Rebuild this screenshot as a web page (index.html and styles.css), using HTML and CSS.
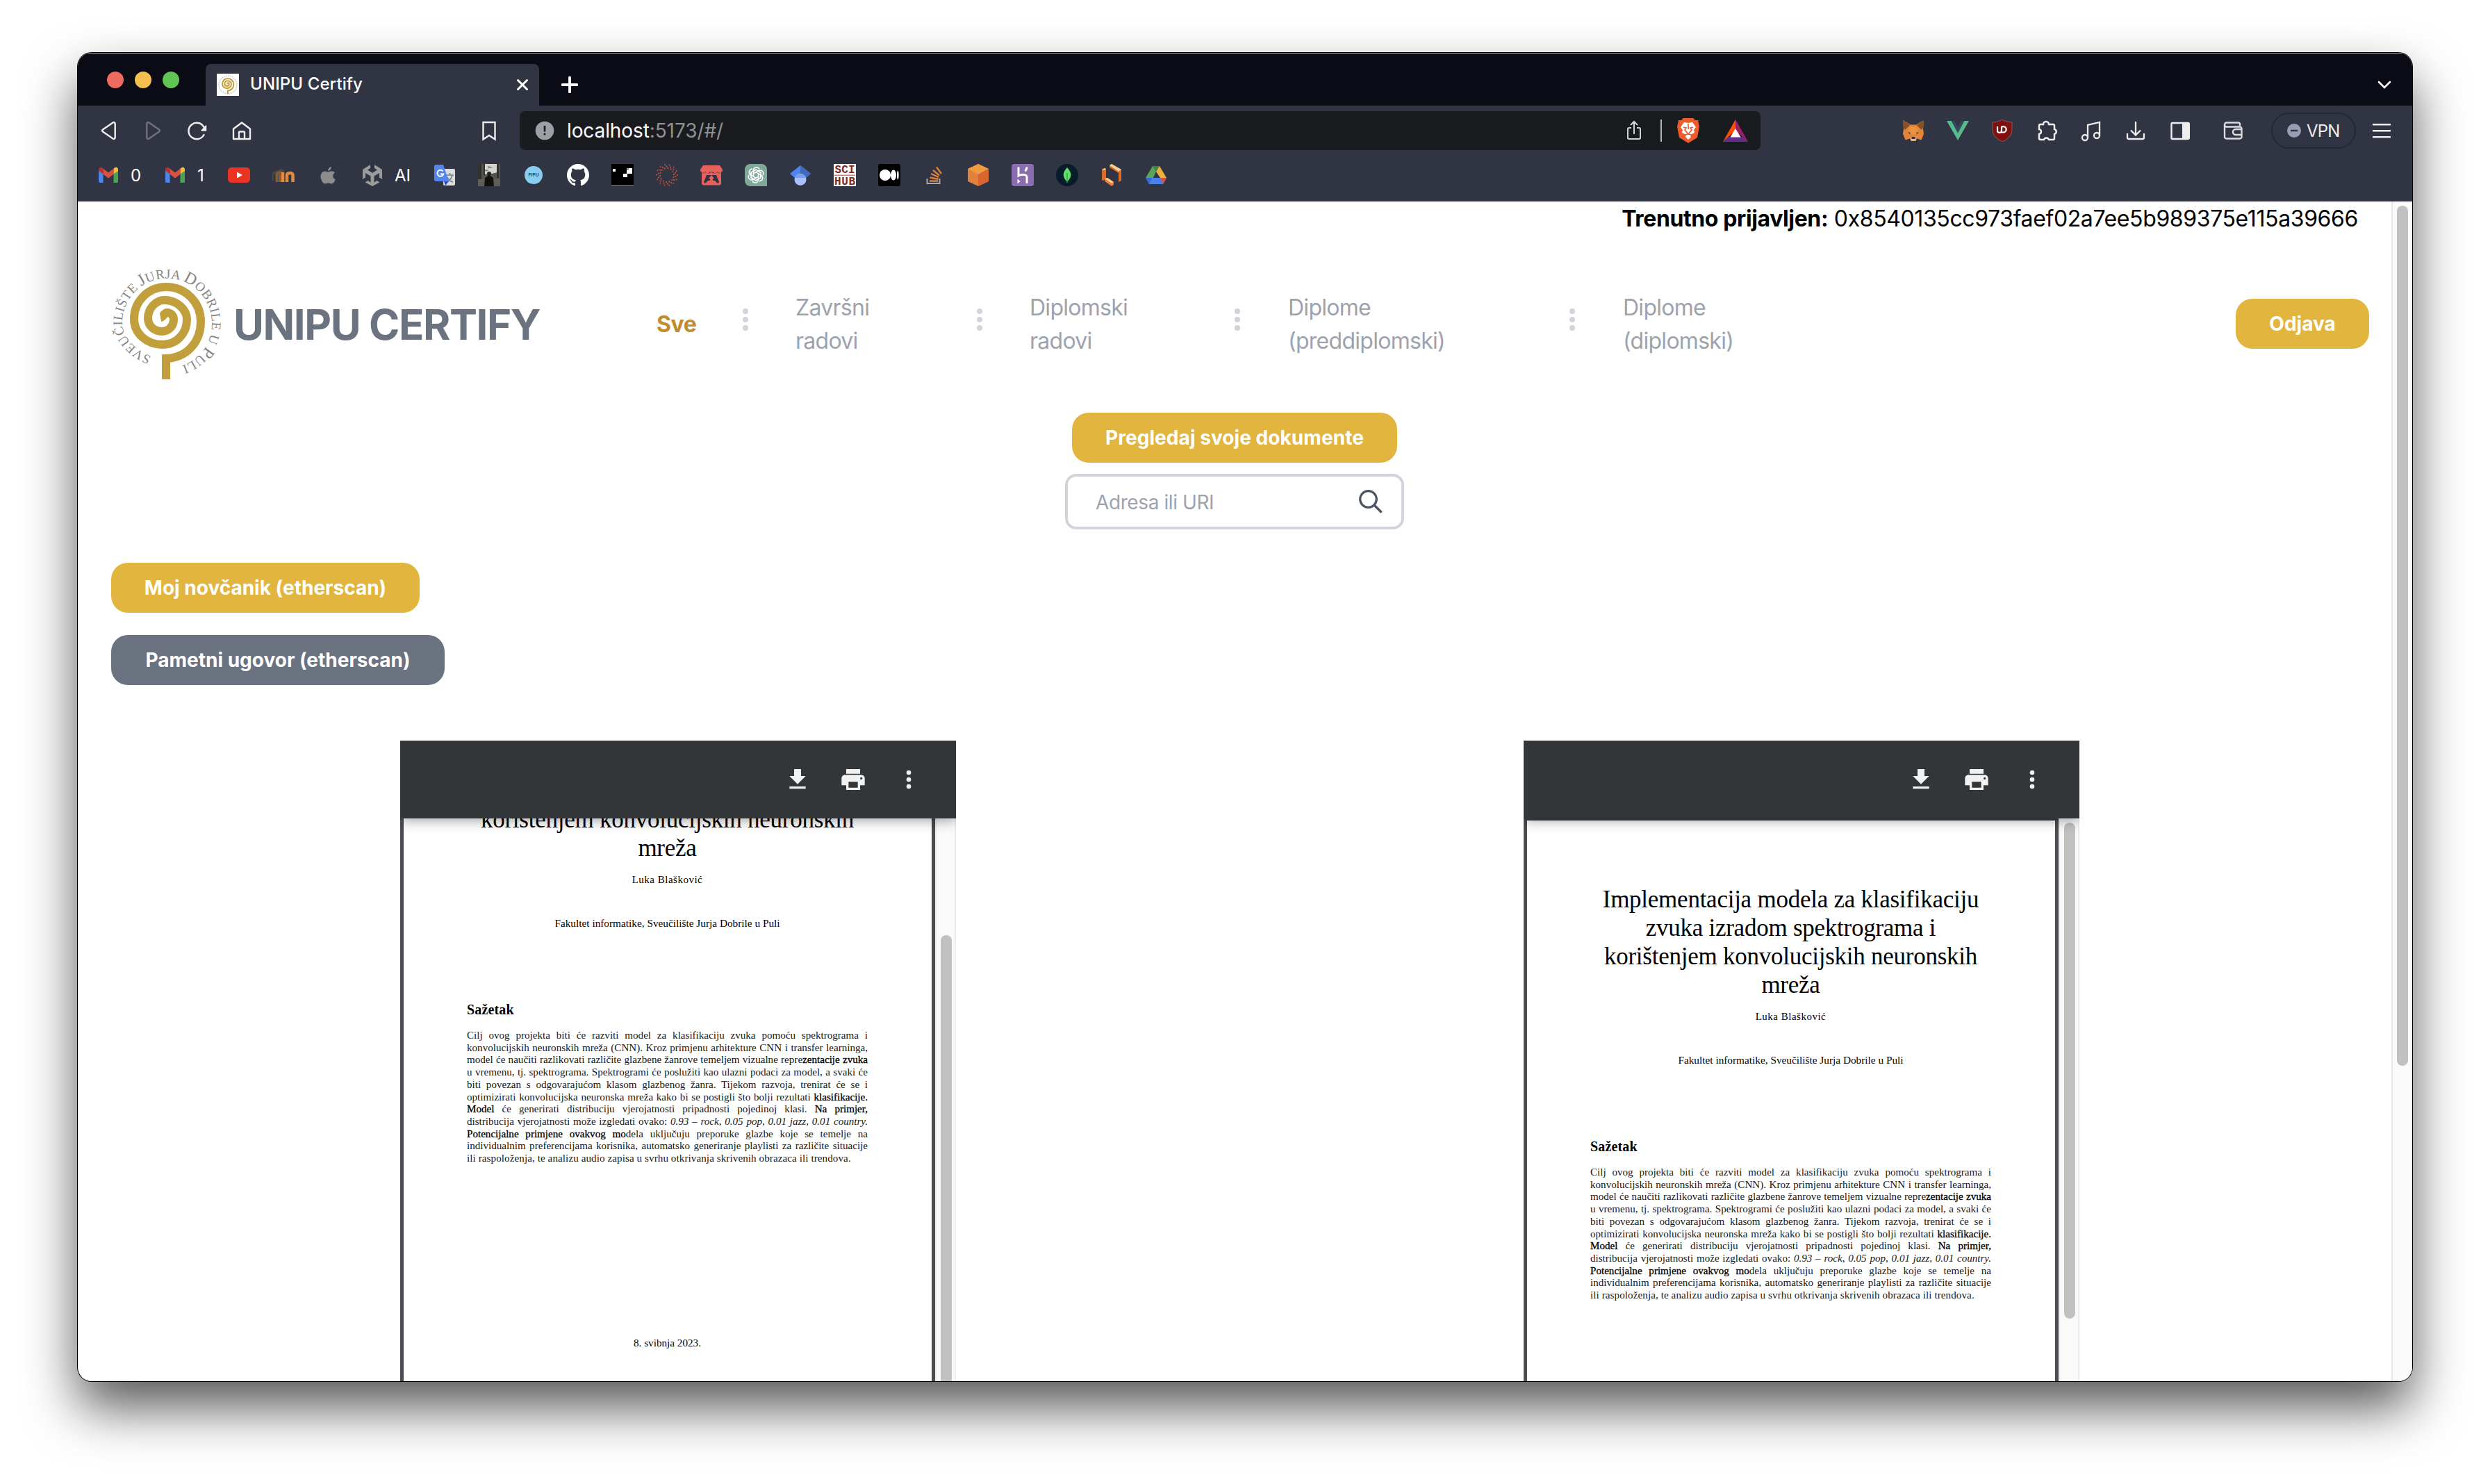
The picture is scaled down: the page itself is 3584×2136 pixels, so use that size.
FILE: index.html
```html
<!DOCTYPE html>
<html lang="hr">
<head>
<meta charset="utf-8">
<title>UNIPU Certify</title>
<link rel="stylesheet" href="styles.css">
</head>
<body>
<svg width="0" height="0" class="defs">
  <defs>
    <symbol id="spiral" viewBox="0 0 160 160">
      <path d="M79 160V130C109 129 129 106 129 77C129 49 107 27 79 27C53 27 33 48 33 73C33 94 51 110 74 110C94 110 109 94 109 74C109 59 94 46 77 46C64 46 53 58 53 72C53 83 62 91 73 91C83 91 90 83 90 74C90 68 86 64 80 64C76 64 76 70 71 71" fill="none" stroke="#c19f3d" stroke-width="12"/>
    </symbol>
    <symbol id="gmail" viewBox="0 0 32 32">
      <path d="M2 8v17a2 2 0 0 0 2 2h4.500V14z" fill="#4b85ee"/><path d="M30 8v17a2 2 0 0 1-2 2h-4.500V14z" fill="#4aa353"/>
      <path d="M23.500 6.500v8L30 10V8c0-3-3-4-5-2.500z" fill="#f2bd42"/><path d="M8.500 6.500v8L2 10V8c0-3 3-4 5-2.500z" fill="#b5342b"/>
      <path d="M8.500 6.700L16 12.500l7.500-5.800v8L16 20.500l-7.500-5.800z" fill="#d95140"/>
    </symbol>
    <symbol id="download" viewBox="0 0 24 24"><path d="M19 9h-4V3H9v6H5l7 7zM5 18v2h14v-2z" fill="#f1f1f1"/></symbol>
    <symbol id="print" viewBox="0 0 24 24"><path d="M19 8H5c-1.660 0-3 1.340-3 3v6h4v4h12v-4h4v-6c0-1.660-1.340-3-3-3zm-3 11H8v-5h8zm3-7a1 1 0 1 1 0-2 1 1 0 0 1 0 2zM18 3H6v4h12z" fill="#f1f1f1"/></symbol>
    <symbol id="more" viewBox="0 0 24 24"><g fill="#f1f1f1"><circle cx="12" cy="6" r="2"/><circle cx="12" cy="12" r="2"/><circle cx="12" cy="18" r="2"/></g></symbol>
    <symbol id="dots" viewBox="0 0 20 32"><g fill="#d1d5db"><circle cx="10" cy="4" r="4"/><circle cx="10" cy="16" r="4"/><circle cx="10" cy="28" r="4"/></g></symbol>
  </defs>
</svg>
<div class="window">
  <div class="tabstrip">
    <div class="lights"><i class="red"></i><i class="yellow"></i><i class="green"></i></div>
    <div class="tab">
      <svg class="favicon" viewBox="-14 -14 188 188"><circle cx="80" cy="80" r="76" fill="none" stroke="#c4c4c4" stroke-width="9" stroke-dasharray="9 8"/><use href="#spiral" width="160" height="160"/></svg>
      <span class="tab-title">UNIPU Certify</span>
      <svg class="close" viewBox="0 0 20 20"><path d="M3.500 3.500l13 13M16.500 3.500l-13 13" stroke="#fff" stroke-width="3" stroke-linecap="round"/></svg>
    </div>
    <svg class="plus" viewBox="0 0 24 24"><path d="M12 1.500v21M1.500 12h21" stroke="#fff" stroke-width="3.800" stroke-linecap="round"/></svg>
    <svg class="chev" viewBox="0 0 20 20"><path d="M2 6l8 8 8-8" fill="none" stroke="#fff" stroke-width="2.600" stroke-linecap="round"/></svg>
  </div>
  <div class="toolbar">
    <svg class="ic" viewBox="0 0 32 32"><path d="M22.500 4.500c1.500-1 3.200 0 3.200 1.800v19.400c0 1.800-1.700 2.800-3.200 1.800L8 17.500c-1.300-1-1.300-2 0-3z" fill="none" stroke="#eeeeee" stroke-width="2.400"/></svg>
    <svg class="ic" viewBox="0 0 32 32"><path d="M10.500 4.500c-1.500-1-3.200 0-3.200 1.800v19.400c0 1.800 1.700 2.800 3.200 1.800L25 17.500c1.300-1 1.300-2 0-3z" fill="none" stroke="#70727d" stroke-width="2.400"/></svg>
    <svg class="ic" viewBox="0 0 32 32"><path d="M25.500 11A11.700 11.700 0 1 0 25.500 22" fill="none" stroke="#eee" stroke-width="2.400" stroke-linecap="round"/><path d="M28.500 9v7h-6.500z" fill="#eee" stroke="#eee" stroke-width="1.500" stroke-linejoin="round"/></svg>
    <svg class="ic" viewBox="0 0 32 32"><path d="M4 13.500L16 4.500l12 9V28H4z M12 28V18.500a1 1 0 0 1 1-1h6a1 1 0 0 1 1 1V28" fill="none" stroke="#eee" stroke-width="2.400" stroke-linejoin="round"/></svg>
    <svg class="ic bm" viewBox="0 0 32 32"><path d="M7.500 4h17v24.500L16 23l-8.500 5.500z" fill="none" stroke="#eee" stroke-width="2.400"/></svg>
    <div class="url">
      <svg class="ic" viewBox="0 0 32 32"><circle cx="16" cy="16" r="13.300" fill="#9aa0a6"/><path d="M16 9v8.500" stroke="#1a1b1f" stroke-width="2.600"/><circle cx="16" cy="21" r="1.600" fill="#1a1b1f"/></svg>
      <span class="addr"><b>localhost</b>:5173/#/</span>
      <svg class="ic share" viewBox="0 0 32 32"><path d="M12 12H9a2 2 0 0 0-2 2v12a2 2 0 0 0 2 2h14a2 2 0 0 0 2-2V14a2 2 0 0 0-2-2h-3M16 21V3M11 8l5-5 5 5" fill="none" stroke="#d3d4d6" stroke-width="2"/></svg>
      <i class="sep"></i>
      <svg class="brave" viewBox="0 0 32 36"><path d="M9 0h14l3 3 4 0 1 5 1 4-3 16-13 8-13-8L0 12l1-4 1-5h4z" fill="#ef5b2a"/><path d="M10 6l6 1 6-1 5 7-3 4 1 4-6 3 1 3-4 4-4-4 1-3-6-3 1-4-3-4z" fill="#fff"/><path d="M9 13l4 1-2 3 5 6 5-6-2-3 4-1M16 8v8M12 24l4-1 4 1" fill="none" stroke="#ef5b2a" stroke-width="1.700"/></svg>
      <svg class="bat" viewBox="0 0 36 32"><path d="M18 0L36 32 18 16z" fill="#9e1f63"/><path d="M18 0L0 32l18-16z" fill="#ff5000"/><path d="M0 32l8-7h20l8 7z" fill="#662d91"/><path d="M18 13l7.500 12.500h-15z" fill="#fff"/></svg>
    </div>
    <svg class="ic" viewBox="0 0 32 32"><path d="M1 1l11 6.500h8L31 1l-1 12 1 8-3.500 8.500-6.500-2-2 3.500h-6l-2-3.500-6.500 2L1 21l1-8z" fill="#e2853a"/><path d="M1 1l10.500 7-7.500 7-3-5zM31 1L20.500 8l7.500 7 3-5z" fill="#8a5027"/><path d="M11 9l-2 9 5 4h4l5-4-2-9-5 2z" fill="#e9923f"/><path d="M13 25h6l1 5.500h-8z" fill="#d8c3b1"/><path d="M13.500 25h5v3h-5zM8 18l4 1-1 2zM24 18l-4 1 1 2z" fill="#2b3550"/></svg>
    <svg class="ic" viewBox="0 0 32 32"><path d="M6 2h5l5 9 5-9h5L16 19z" fill="#35495e"/><path d="M0 2h6.500L16 19.500 25.500 2H32L16 30z" fill="#56ba89"/></svg>
    <svg class="ic" viewBox="0 0 32 32"><path d="M16 0c4 3 9 4 14 4v10c0 9-6 14-14 18C8 28 2 23 2 14V4c5 0 10-1 14-4z" fill="#800f0f" stroke="#8e5a5d"/><path d="M9 10v6a3 3 0 0 0 6 0v-6M15 10v8.500h2.500a4.200 4.200 0 0 0 0-8.400H15" fill="none" stroke="#fff" stroke-width="2.200"/></svg>
    <svg class="ic" viewBox="0 0 32 32"><path d="M11 7a4 4 0 0 1 8 0h6a2 2 0 0 1 2 2v5a3.600 3.600 0 0 1 0 7v6a2 2 0 0 1-2 2h-6a3.700 3.700 0 0 0-7 0H7a2 2 0 0 1-2-2v-6c4-1 4-6 0-7V9a2 2 0 0 1 2-2z" fill="none" stroke="#eee" stroke-width="2.500"/></svg>
    <svg class="ic" viewBox="0 0 32 32"><g fill="none" stroke="#eee" stroke-width="2.300"><circle cx="7" cy="26" r="4"/><circle cx="24" cy="23" r="4"/><path d="M11 26V8l17-4v19"/></g></svg>
    <svg class="ic" viewBox="0 0 32 32"><path d="M16 3v19M9 15.500l7 7 7-7M4 20v6a2 2 0 0 0 2 2h20a2 2 0 0 0 2-2v-6" fill="none" stroke="#eee" stroke-width="2.300"/></svg>
    <svg class="ic" viewBox="0 0 32 32"><rect x="3.500" y="5" width="25" height="23" rx="1.500" fill="none" stroke="#eee" stroke-width="2.400"/><path d="M19 4h8.500c1.500 0 2.500 1 2.500 2v20c0 1.500-1 2.500-2.500 2.500H19z" fill="#eee"/></svg>
    <svg class="ic wallet" viewBox="0 0 32 32"><path d="M26 9V6.500a2 2 0 0 0-2-2H7a2.800 2.800 0 0 0 0 6h19a2.500 2.500 0 0 1 2.500 2.500v12a2.500 2.500 0 0 1-2.500 2.500H7A2.800 2.800 0 0 1 4 24V7M28 14h-8a3.500 3.500 0 0 0 0 8h8" fill="none" stroke="#dcdce0" stroke-width="2.400"/></svg>
    <div class="vpn"><svg viewBox="0 0 20 20"><circle cx="10" cy="10" r="10" fill="#9a9cb3"/><path d="M5 10h10" stroke="#313443" stroke-width="2.600"/></svg><span>VPN</span></div>
    <svg class="ic menu" viewBox="0 0 32 32"><path d="M3 7.300h26M3 16.300h26M3 25.300h26" stroke="#eee" stroke-width="2.400"/></svg>
  </div>
  <div class="bookmarks">
    <div class="bk w96"><svg viewBox="0 0 32 32"><use href="#gmail"/></svg><span>0</span></div>
    <div class="bk w92"><svg viewBox="0 0 32 32"><use href="#gmail"/></svg><span>1</span></div>
    <div class="bk"><svg viewBox="0 0 32 32"><rect x="0" y="5" width="32" height="22" rx="5" fill="#e93323"/><path d="M13 11.500l8 4.500-8 4.500z" fill="#fff"/></svg></div>
    <div class="bk"><svg viewBox="0 0 32 32"><path d="M0 12l12-5 6 2-5 5-11 1v9H0z" fill="#4b4743"/><path d="M6.500 26V16c0-3 4-4.500 7-3M11 26V15" fill="none" stroke="#8a5a35" stroke-width="4"/><path d="M15 26V12M21 26V16c0-4 8.500-4 8.500 0v10" fill="none" stroke="#e3893b" stroke-width="4.600"/></svg></div>
    <div class="bk"><svg viewBox="0 0 32 32"><path d="M21 4c0 3-2 5.500-5 6 0-3 2-5.500 5-6zM16 11.500c2 0 3-1.300 5.500-1.300 2 0 3.500 1 4.500 2.300-4 2.500-3.500 8 .8 9.700C25.500 25.500 23.500 28.500 21 28.500c-1.800 0-2.500-1-4.500-1s-2.800 1-4.500 1C8.500 28.500 5.500 22 5.500 18c0-4.500 3-7.500 6-7.500 2 0 3.200 1 4.500 1z" fill="#8c8c8c"/></svg></div>
    <div class="bk w104"><svg viewBox="0 0 32 32"><path d="M13 1v5l-4 2.500 7 4.500 7-4.500L19 6V1l11 7v14l-4-2.500V13l-7.500 4.500v9l4-2.500 4 2.500L16 32 5.500 26.500l4-2.500 4 2.500v-9L6 13v6.500L2 22V8z" fill="#9b9b9b"/></svg><span>AI</span></div>
    <div class="bk"><svg viewBox="0 0 32 32"><rect x="14" y="7" width="17" height="24" rx="2" fill="#dcdcdc"/><path d="M18 16h11M23.500 13v3M27 16c-1 5-4 8-8 10M20 19c1 3 4 6 8 7" stroke="#6f8296" stroke-width="1.600" fill="none"/><path d="M15 25h7l-5 6z" fill="#2f50b8"/><path d="M3 1h11l8 24H3a2 2 0 0 1-2-2V3a2 2 0 0 1 2-2z" fill="#5484ee"/><path d="M13.500 10.500a4.500 4.500 0 1 0 .8 4H10" fill="none" stroke="#fff" stroke-width="2"/></svg></div>
    <div class="bk"><svg viewBox="0 0 32 32"><rect width="32" height="32" fill="#55534f"/><path d="M8 0h20v12l-8 2-12 1z" fill="#d5d4d0"/><path d="M0 0h5v22H0zM8 0h2v16H8zM27 0h3v20h-3z" fill="#33322f"/><path d="M14 3l8 2-7 1zM10 8l6 1-5 2z" fill="#77756f"/><path d="M0 22h32v10H0z" fill="#605f5a"/><circle cx="16" cy="14" r="3" fill="#222"/><path d="M10 20l6-4 6 4 1 12H9z" fill="#111"/></svg></div>
    <div class="bk"><svg viewBox="0 0 32 32"><circle cx="16" cy="16" r="13" fill="#86cdf1"/><text x="16" y="18.300" text-anchor="middle" class="fipu" textLength="15">FIPU</text></svg></div>
    <div class="bk"><svg viewBox="0 0 16 16"><path fill="#fff" d="M8 0C3.580 0 0 3.580 0 8c0 3.540 2.290 6.530 5.470 7.590.4.070.55-.17.55-.38 0-.19-.01-.82-.01-1.490-2.010.37-2.530-.49-2.690-.94-.09-.23-.48-.94-.82-1.130-.28-.15-.68-.52-.01-.53.63-.01 1.080.58 1.230.82.720 1.210 1.870.87 2.330.66.070-.52.28-.87.51-1.070-1.780-.2-3.640-.89-3.640-3.950 0-.87.31-1.590.82-2.150-.08-.2-.36-1.020.08-2.120 0 0 .67-.21 2.200.82.640-.18 1.320-.27 2-.27s1.360.09 2 .27c1.530-1.040 2.200-.82 2.200-.82.440 1.100.16 1.920.08 2.120.51.56.82 1.270.82 2.150 0 3.070-1.870 3.750-3.650 3.950.29.25.54.73.54 1.480 0 1.070-.01 1.930-.01 2.200 0 .21.15.46.55.38A8.010 8.010 0 0 0 16 8c0-4.420-3.580-8-8-8z"/></svg></div>
    <div class="bk"><svg viewBox="0 0 32 32"><rect width="32" height="32"/><path d="M0 30h32v2H0z" fill="#5b5b5b"/><path d="M2 7h4v4H2zM22 6h8v8h-8zM17 14h6v5h-6z" fill="#fff"/><path d="M22 6h3v3h-3z" fill="#999"/></svg></div>
    <div class="bk"><svg viewBox="0 0 32 32"><g fill="none" stroke="#d6503f" stroke-linecap="round"><circle cx="16" cy="16" r="15" stroke-width="2" stroke-dasharray="0 6.730"/><circle cx="16" cy="16" r="12.500" stroke-width="2" stroke-dasharray="0 5.610" transform="rotate(9 16 16)"/><circle cx="16" cy="16" r="10" stroke-width="2" stroke-dasharray="0 4.490" transform="rotate(18 16 16)"/></g></svg></div>
    <div class="bk"><svg viewBox="0 0 32 32"><path d="M4 2h24l4 6c0 6-6 6-7 3-2 3-6 3-7 0-1 2-3 2-4 0-1 3-5 3-7 0-1 3-7 3-7-3z" fill="#e8605b"/><path d="M2 13c3 1 4 0 5-1 3 2 6 2 9 0 3 2 6 2 9 0 1 1 2 2 5 1v15c0 2-2 2.500-4 2.500H6c-2 0-4-.5-4-2.500z" fill="#e8605b"/><path d="M9 16h14l4 10c0 2-3 2-4 0l-2-2h-10l-2 2c-1 2-4 2-4 0z" fill="#313443"/><path d="M16 16l4 5h-2v3h-4v-3h-2z" fill="#e8605b"/></svg></div>
    <div class="bk"><svg viewBox="0 0 32 32"><path d="M8 0h16a8 8 0 0 1 8 8v24H8a8 8 0 0 1-8-8V8a8 8 0 0 1 8-8z" fill="#80a89b"/><g fill="none" stroke="#fff" stroke-width="1.500"><g id="petal"><path d="M12.500 18V9.500a4.500 4.500 0 0 1 8.500-2.100M12.500 10.500l4-2.200 7 4"/></g><use href="#petal" transform="rotate(60 16 16)"/><use href="#petal" transform="rotate(120 16 16)"/><use href="#petal" transform="rotate(180 16 16)"/><use href="#petal" transform="rotate(240 16 16)"/><use href="#petal" transform="rotate(300 16 16)"/></g></svg></div>
    <div class="bk"><svg viewBox="0 0 32 32"><path d="M16 2L1 14l8 7h14l8-7z" fill="#4e86ee"/><path d="M16 2l15 12-8 7-7-6z" fill="#4268be"/><circle cx="16" cy="22.500" r="8.500" fill="#a6c0f8"/><path d="M8 20a8.500 8.500 0 0 1 16 0z" fill="#789ff2"/></svg></div>
    <div class="bk"><svg viewBox="0 0 32 32"><rect width="32" height="32" fill="#fff"/><text x="16" y="12.500" textLength="29" text-anchor="middle" class="sci">SCI</text><path d="M1 16.200h30" stroke="#a2463e"/><text x="16" y="30" textLength="30" text-anchor="middle" class="sci">HUB</text></svg></div>
    <div class="bk"><svg viewBox="0 0 32 32"><rect width="32" height="32" rx="3"/><g fill="#fff"><circle cx="10" cy="16" r="8"/><ellipse cx="22" cy="16" rx="4" ry="7.500"/><ellipse cx="28.300" cy="16" rx="1.300" ry="6.500"/></g></svg></div>
    <div class="bk"><svg viewBox="0 0 32 32"><path d="M6.500 21v7h18v-7" fill="none" stroke="#a9a9ab" stroke-width="2"/><path d="M10 24.500h12M10.500 19.500l12 2.300M12 14l11 5M15 9l9 7.500M20 4.500l7 9.500" stroke="#dc813a" stroke-width="2.300"/></svg></div>
    <div class="bk"><svg viewBox="0 0 32 32"><path d="M16 0l15 7v18l-15 7L1 25V7z" fill="#e2813a"/><path d="M16 0l15 7-15 8L1 7z" fill="#ee9b41"/><path d="M31 7v18l-15 7V15z" fill="#d9662f"/></svg></div>
    <div class="bk"><svg viewBox="0 0 32 32"><rect width="32" height="32" rx="4" fill="#8a6db0"/><path d="M10 4.500v12.500c4-2 12-3 12 2V28M22 4.500c0 2-1 4-2.500 6" fill="none" stroke="#fff" stroke-width="3"/><path d="M8.500 21.500l4 3.500-4 3.500z" fill="#fff"/></svg></div>
    <div class="bk"><svg viewBox="0 0 32 32"><circle cx="16" cy="16" r="16" fill="#071d2b"/><path d="M16 5c7 8 7 13 .6 20h-1.200C9 18 9 13 16 5z" fill="#62e36b"/><path d="M16 13v14" stroke="#35a048" stroke-width="1.500"/></svg></div>
    <div class="bk"><svg viewBox="0 0 32 32"><path d="M2 8l4-2 2 1v14l-4 3-2-1z" fill="#db6b2b"/><path d="M2 8l4-2 2 1-3 2z" fill="#f4c88a"/><path d="M6 21l4-1 9 6v4l-3 2-10-7z" fill="#e8763a"/><path d="M6 21l4-1 9 6-3 2z" fill="#f8d08c"/><path d="M13 2l3-2 14 8v16l-4 2V13L13 5z" fill="#dc6c2c"/><path d="M13 2l3-2 14 8-4 3z" fill="#f8d08c"/></svg></div>
    <div class="bk"><svg viewBox="0 0 32 32"><path d="M11 3h10l-5 8-8 18-7-9z" fill="#57a557"/><path d="M11 3h10l-5 8.500z" fill="#3d8446"/><path d="M21 3l10 17H22L16 11z" fill="#ecb03c"/><path d="M1 20h30l-5 9H6z" fill="#4b7fe9"/><path d="M1 20h9l-4 9z" fill="#3668d6"/><path d="M31 20h-9l4 9z" fill="#d9503f"/><path d="M16 13l4 7h-8z" fill="#313443"/></svg></div>
  </div>
  <div class="viewport">
    <main class="page">
      <p class="account"><strong>Trenutno prijavljen:</strong> 0x8540135cc973faef02a7ee5b989375e115a39666</p>
      <header class="header">
        <svg class="logo" viewBox="0 0 160 160">
          <use href="#spiral"/>
          <path id="ring" d="M58 127C36 118 16 100 16 79A64.500 64.500 0 0 1 145 79C145 110 126 134 97 142" fill="none"/>
          <text class="ring-text"><textPath href="#ring" textLength="350">SVEUČILIŠTE <tspan class="big">J</tspan>URJA <tspan class="big">D</tspan>OBRILE U <tspan class="big">P</tspan>ULI</textPath></text>
        </svg>
        <h1 class="brand">UNIPU CERTIFY</h1>
        <nav class="nav">
          <a class="active">Sve</a>
          <svg class="dots"><use href="#dots"/></svg>
          <a>Završni<br>radovi</a>
          <svg class="dots"><use href="#dots"/></svg>
          <a>Diplomski<br>radovi</a>
          <svg class="dots"><use href="#dots"/></svg>
          <a>Diplome<br>(preddiplomski)</a>
          <svg class="dots"><use href="#dots"/></svg>
          <a>Diplome<br>(diplomski)</a>
        </nav>
        <button class="btn logout">Odjava</button>
      </header>
      <section class="actions">
        <button class="btn mine">Pregledaj svoje dokumente</button>
        <div class="search"><span>Adresa ili URI</span>
          <svg viewBox="0 0 36 36"><circle cx="14.500" cy="14.500" r="11.800" fill="none" stroke="#4b5563" stroke-width="3.200"/><path d="M23 23l9.500 9.500" stroke="#4b5563" stroke-width="3.600" stroke-linecap="round"/></svg>
        </div>
      </section>
      <section class="links">
        <button class="btn w1">Moj novčanik (etherscan)</button>
        <button class="btn w2">Pametni ugovor (etherscan)</button>
      </section>
      <section class="docs">
        <article class="pdf">
          <div class="pdf-bar"><svg><use href="#download"/></svg><svg><use href="#print"/></svg><svg><use href="#more"/></svg></div>
          <div class="pdf-body">
            <div class="sheet scrolled">
              <h2 class="doc-title">Implementacija modela za klasifikaciju<br>zvuka izradom spektrograma i<br>korištenjem konvolucijskih neuronskih<br>mreža</h2>
              <p class="author">Luka Blašković</p>
              <p class="faculty">Fakultet informatike, Sveučilište Jurja Dobrile u Puli</p>
              <h3 class="abs">Sažetak</h3>
              <div class="para">
                <p>Cilj ovog projekta biti će razviti model za klasifikaciju zvuka pomoću spektrograma i</p>
                <p>konvolucijskih neuronskih mreža (CNN). Kroz primjenu arhitekture CNN i transfer learninga,</p>
                <p>model će naučiti razlikovati različite glazbene žanrove temeljem vizualne repre<b>zentacije zvuka</b></p>
                <p>u vremenu, tj. spektrograma. Spektrogrami će poslužiti kao ulazni podaci za model, a svaki će</p>
                <p>biti povezan s odgovarajućom klasom glazbenog žanra. Tijekom razvoja, trenirat će se i</p>
                <p>optimizirati konvolucijska neuronska mreža kako bi se postigli što bolji rezultati <b>klasifikacije.</b></p>
                <p><b>Model</b> će generirati distribuciju vjerojatnosti pripadnosti pojedinoj klasi. <b>Na primjer,</b></p>
                <p>distribucija vjerojatnosti može izgledati ovako: <em>0.93 – rock, 0.05 pop, 0.01 jazz, 0.01 country.</em></p>
                <p><b>Potencijalne primjene ovakvog mo</b>dela uključuju preporuke glazbe koje se temelje na</p>
                <p>individualnim preferencijama korisnika, automatsko generiranje playlisti za različite situacije</p>
                <p class="last">ili raspoloženja, te analizu audio zapisa u svrhu otkrivanja skrivenih obrazaca ili trendova.</p>
              </div>
              <p class="date">8. svibnja 2023.</p>
            </div>
            <div class="pdf-scroll"><i class="low"></i></div>
          </div>
        </article>
        <article class="pdf">
          <div class="pdf-bar"><svg><use href="#download"/></svg><svg><use href="#print"/></svg><svg><use href="#more"/></svg></div>
          <div class="pdf-body">
            <div class="sheet top">
              <h2 class="doc-title">Implementacija modela za klasifikaciju<br>zvuka izradom spektrograma i<br>korištenjem konvolucijskih neuronskih<br>mreža</h2>
              <p class="author">Luka Blašković</p>
              <p class="faculty">Fakultet informatike, Sveučilište Jurja Dobrile u Puli</p>
              <h3 class="abs">Sažetak</h3>
              <div class="para">
                <p>Cilj ovog projekta biti će razviti model za klasifikaciju zvuka pomoću spektrograma i</p>
                <p>konvolucijskih neuronskih mreža (CNN). Kroz primjenu arhitekture CNN i transfer learninga,</p>
                <p>model će naučiti razlikovati različite glazbene žanrove temeljem vizualne repre<b>zentacije zvuka</b></p>
                <p>u vremenu, tj. spektrograma. Spektrogrami će poslužiti kao ulazni podaci za model, a svaki će</p>
                <p>biti povezan s odgovarajućom klasom glazbenog žanra. Tijekom razvoja, trenirat će se i</p>
                <p>optimizirati konvolucijska neuronska mreža kako bi se postigli što bolji rezultati <b>klasifikacije.</b></p>
                <p><b>Model</b> će generirati distribuciju vjerojatnosti pripadnosti pojedinoj klasi. <b>Na primjer,</b></p>
                <p>distribucija vjerojatnosti može izgledati ovako: <em>0.93 – rock, 0.05 pop, 0.01 jazz, 0.01 country.</em></p>
                <p><b>Potencijalne primjene ovakvog mo</b>dela uključuju preporuke glazbe koje se temelje na</p>
                <p>individualnim preferencijama korisnika, automatsko generiranje playlisti za različite situacije</p>
                <p class="last">ili raspoloženja, te analizu audio zapisa u svrhu otkrivanja skrivenih obrazaca ili trendova.</p>
              </div>
            </div>
            <div class="pdf-scroll"><i class="high"></i></div>
          </div>
        </article>
      </section>
    </main>
    <div class="scrollbar"><i></i></div>
  </div>
</div>
</body>
</html>
```
FILE: styles.css
```css
* { box-sizing: border-box; }
body {
  margin: 0;
  width: 3584px;
  height: 2136px;
  padding: 76px 112px 0;
  overflow: hidden;
  background: #fff;
  font-family: Inter, "Liberation Sans", sans-serif;
}
p, h1, h2, h3 { margin: 0; }
i { display: block; }
svg { display: block; flex: none; }
.defs { position: absolute; }

.window {
  display: flex;
  flex-direction: column;
  width: 3360px;
  height: 1912px;
  border-radius: 20px;
  overflow: hidden;
  background: #fff;
  box-shadow: 0 0 0 1px #000, 0 38px 76px rgba(0, 0, 0, .66);
}

.tabstrip {
  display: flex;
  flex: none;
  height: 76px;
  background: #0b0b15;
  box-shadow: inset 0 2px 0 #5f6264;
}
.lights { display: flex; gap: 16px; width: 184px; padding: 27px 0 0 42px; }
.lights i { width: 24px; height: 24px; border-radius: 50%; }
.red { background: #ed6a5e; }
.yellow { background: #f5bf4f; }
.green { background: #61c554; }
.tab {
  display: flex;
  align-items: center;
  width: 480px;
  height: 60px;
  margin-top: 16px;
  padding: 0 14px 0 16px;
  border-radius: 8px 8px 0 0;
  background: #313443;
}
.favicon { width: 32px; height: 32px; background: #fff; }
.tab-title { margin: -2px 0 0 16px; font-size: 24px; line-height: 32px; font-weight: 500; letter-spacing: .11px; color: #fff; white-space: nowrap; }
.close { width: 20px; height: 20px; margin-left: auto; }
.plus { width: 24px; height: 24px; margin: 34px 0 0 32px; }
.chev { width: 20px; height: 20px; margin: 36px 30px 0 auto; }

.toolbar { display: flex; flex: none; align-items: center; height: 72px; padding-left: 28px; background: #313443; }
.ic { width: 32px; height: 32px; margin-right: 32px; }
.bm { margin-left: 292px; margin-right: 28px; }
.url {
  display: flex;
  align-items: center;
  width: 1786px;
  height: 56px;
  margin-right: 204px;
  padding: 0 18px 0 20px;
  border-radius: 8px;
  background: #1a1b1f;
}
.url .ic { margin-right: 16px; }
.addr { font-size: 28px; letter-spacing: -.1px; color: #8f9094; white-space: nowrap; }
.addr b { font-weight: 400; color: #fff; }
.url .share { margin: 0 22px 0 auto; }
.sep { width: 2px; height: 32px; margin-right: 22px; background: #b3b4b7; }
.brave { width: 32px; height: 36px; margin-right: 34px; }
.bat { width: 36px; height: 32px; }
.wallet { margin: 0 39px 0 12px; }
.vpn {
  display: flex;
  align-items: center;
  gap: 8px;
  width: 122px;
  height: 52px;
  margin-right: 21px;
  padding-left: 21px;
  border: 2px solid #262834;
  border-radius: 26px;
  font-size: 24px;
  letter-spacing: -.8px;
  color: #eee;
}
.vpn svg { width: 20px; height: 20px; }
.menu { margin: 0; }

.bookmarks { display: flex; flex: none; height: 66px; padding: 12px 0 0 28px; background: #313443; }
.bk { display: flex; align-items: center; gap: 16px; width: 64px; height: 32px; font-size: 24px; color: #fff; }
.bk svg { width: 32px; height: 32px; }
.w96 { width: 96px; }
.w92 { width: 92px; }
.w104 { width: 104px; }
.fipu { font: 700 6.500px Inter, sans-serif; fill: #26445c; }
.sci { font: 700 16px "Liberation Mono", monospace; fill: #7a2a23; }

.viewport { display: flex; flex: 1; min-height: 0; }
.page { display: flex; flex-direction: column; width: 3330px; height: 1698px; overflow: hidden; }
.scrollbar { width: 30px; padding: 6px 0 0 6px; background: #fafafa; border-left: 2px solid #e8e8e8; }
.scrollbar i { width: 16px; height: 1238px; border-radius: 8px; background: #c1c1c1; }

.account { flex: none; height: 48px; padding-right: 48px; text-align: right; font-size: 32px; line-height: 50px; letter-spacing: -.38px; color: #000; white-space: nowrap; }
.header { display: flex; flex: none; align-items: center; height: 160px; margin-top: 48px; padding: 0 32px 0 48px; }
.logo { width: 160px; height: 160px; overflow: visible; }
.ring-text { font: 19px "Liberation Serif", serif; fill: #858585; }
.big { font-size: 24px; }
.brand { width: 606px; padding: 1px 0 0 16px; font-size: 60px; line-height: 72px; font-weight: 700; letter-spacing: -1.420px; color: #6b7280; white-space: nowrap; }
.nav {
  display: grid;
  grid-template-columns: 118px 82px 255px 82px 289px 83px 399px 83px 200px;
  align-items: center;
  margin: 2px 0 0 19px;
  font-size: 32px;
  line-height: 48px;
  letter-spacing: -.720px;
  color: #9ca3af;
  white-space: nowrap;
}
.active { font-weight: 700; letter-spacing: -.4px; color: #c08c2d; }
.dots { width: 20px; height: 32px; margin-top: -14px; }
.btn {
  display: block;
  height: 72px;
  padding: 0;
  border: 0;
  border-radius: 24px;
  background: #e2b53e;
  font: 700 28px/72px Inter, sans-serif;
  color: #fff;
  text-align: center;
  white-space: nowrap;
}
.logout { width: 192px; margin-left: auto; }
.actions { display: flex; flex: none; flex-direction: column; align-items: center; gap: 16px; margin-top: 48px; }
.mine { width: 468px; letter-spacing: .06px; }
.search {
  display: flex;
  align-items: center;
  justify-content: space-between;
  width: 488px;
  height: 80px;
  padding: 0 26px 0 40px;
  border: 4px solid #d1d5db;
  border-radius: 16px;
  font-size: 28px;
  line-height: 34px;
  letter-spacing: -.4px;
  color: #9ca3af;
}
.search span { padding-top: 2px; }
.search svg { width: 36px; height: 36px; }
.links { display: flex; flex: none; flex-direction: column; gap: 32px; margin: 48px 0 0 48px; }
.w1 { width: 444px; }
.w2 { width: 480px; background: #6b7280; }

.docs { display: flex; flex: none; gap: 817px; margin-top: 80px; padding-left: 464px; }
.pdf { width: 800px; height: 922px; overflow: hidden; background: #fff; }
.pdf-bar {
  position: relative;
  display: flex;
  align-items: center;
  justify-content: flex-end;
  gap: 40px;
  height: 112px;
  padding-right: 48px;
  background: #323639;
  box-shadow: 0 2px 18px rgba(0, 0, 0, .4);
}
.pdf-bar svg { width: 40px; height: 40px; }
.pdf-body { display: flex; height: 810px; }
.sheet {
  width: 770px;
  padding: 0 92px 0 91px;
  border-left: 5px solid #4a4d51;
  border-right: 5px solid #4a4d51;
  background: #fff;
  font-family: "Liberation Serif", serif;
  color: #000;
  overflow: hidden;
}
.top { border-top: 3px solid #3e4145; }
.doc-title { font-size: 35px; font-weight: 400; line-height: 41px; letter-spacing: -.25px; text-align: center; white-space: nowrap; }
.scrolled .doc-title { margin-top: -101px; }
.top .doc-title { margin-top: 93px; }
.author { margin-top: 15px; font-size: 15px; line-height: 20px; letter-spacing: .5px; text-align: center; }
.faculty { margin-top: 43px; font-size: 15.300px; line-height: 20px; text-align: center; white-space: nowrap; }
.abs { margin-top: 102px; font-size: 20px; line-height: 24px; letter-spacing: .15px; }
.para { margin-top: 17px; font-size: 15.100px; line-height: 17.700px; color: #161616; }
.para p { text-align: justify; text-align-last: justify; white-space: nowrap; }
.para b { font-weight: 400; color: #000; -webkit-text-stroke: .3px #000; }
.para p.last { text-align: left; text-align-last: left; letter-spacing: .085px; }
.date { margin-top: 246px; font-size: 15.200px; line-height: 20px; text-align: center; }
.pdf-scroll { width: 30px; background: #fafafa; border-right: 2px solid #ededed; border-left: 2px solid #ededed; padding-left: 6px; }
.pdf-scroll i { width: 16px; border-radius: 8px; background: #c1c1c1; }
.low { height: 700px; margin-top: 168px; }
.high { height: 714px; margin-top: 6px; }
```
